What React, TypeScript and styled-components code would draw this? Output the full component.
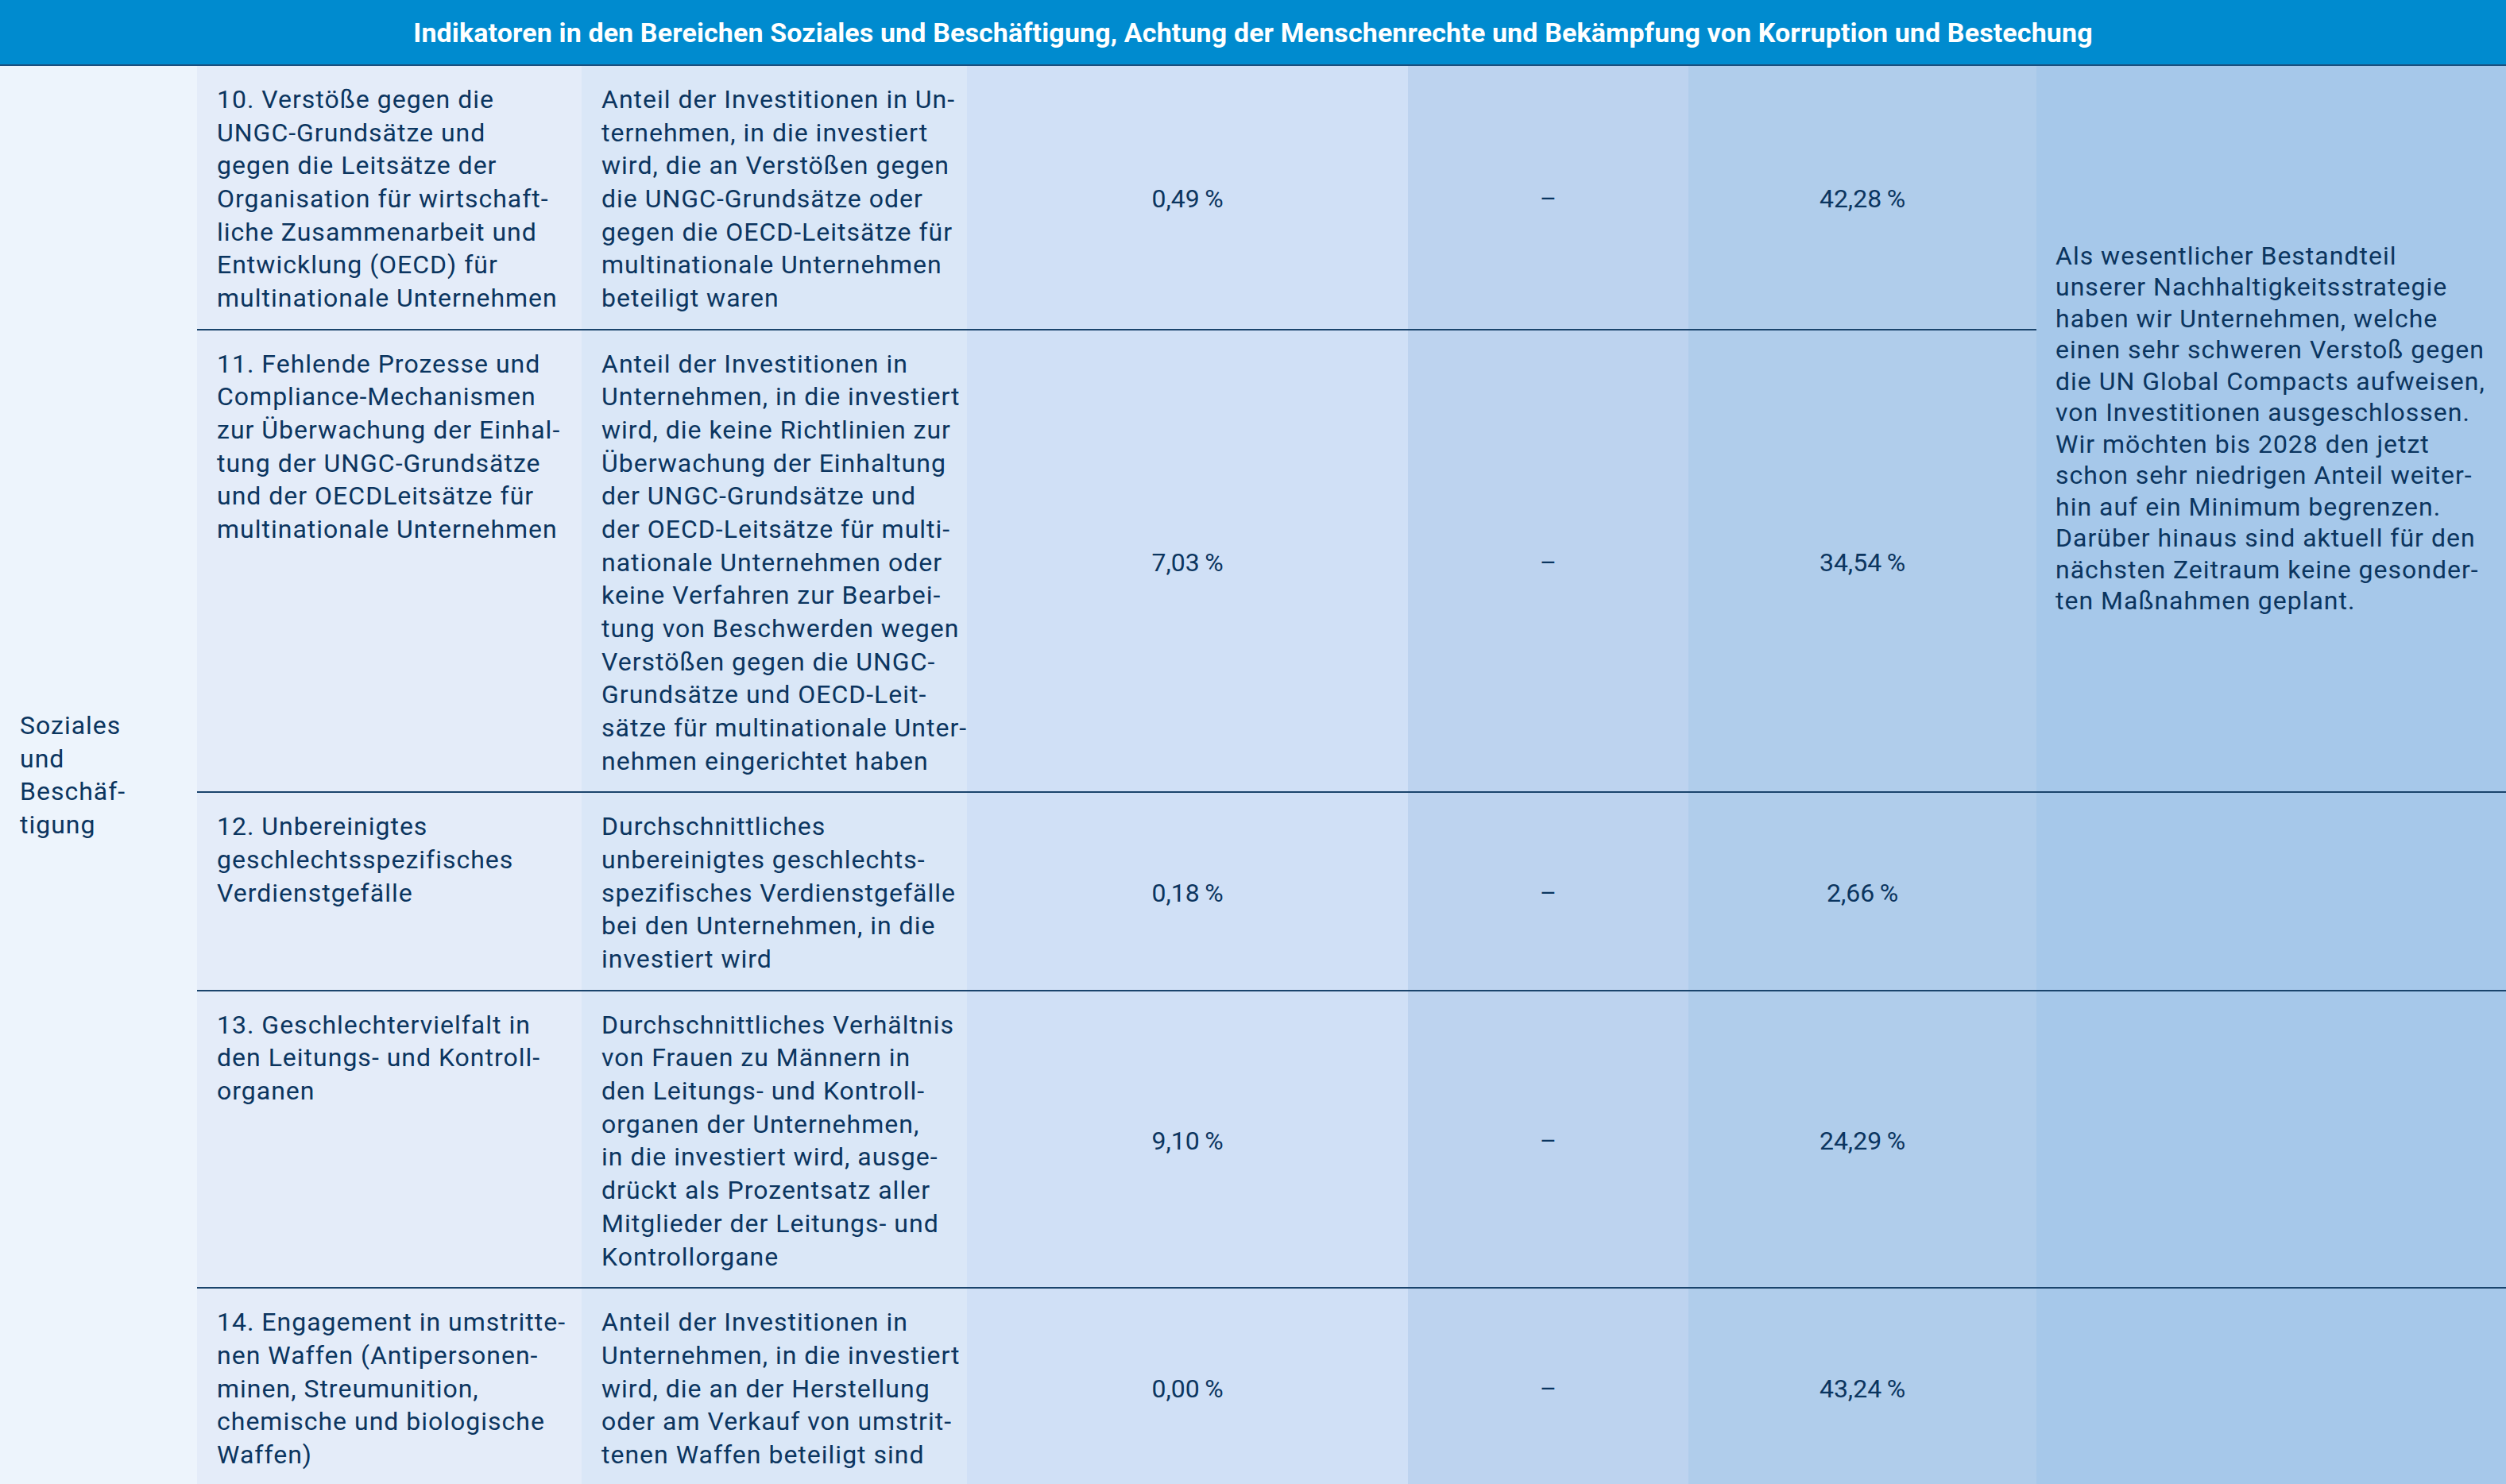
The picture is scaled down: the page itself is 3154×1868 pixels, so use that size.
import React from "react";
import styled, { createGlobalStyle } from "styled-components";

const GlobalStyle = createGlobalStyle`
  html, body { margin: 0; padding: 0; background: #ffffff; }
  body { font-family: Roboto, "Liberation Sans", Arial, sans-serif; }
  * { box-sizing: border-box; }
`;

const COL_WIDTHS = [248, 484, 485, 555, 353, 438, 591];
const COL_BG = ["#edf4fc", "#e4ecf9", "#dae7f7", "#d0e0f6", "#bdd3ef", "#b0cdeb", "#a6c8ea"];
const INK = "#0b355f";
const RULE = "#1a446c";

const Table = styled.table`
  width: 3154px;
  border-collapse: separate;
  border-spacing: 0;
  table-layout: fixed;
  color: ${INK};
  font-family: Roboto, "Liberation Sans", Arial, sans-serif;
  font-size: 32px;
  line-height: 41.67px;
`;

const Col = styled.col<{ $w: number }>`
  width: ${(p) => p.$w}px;
`;

const HeadCell = styled.th`
  height: 83px;
  padding: 0 20px;
  background: #008bcf;
  color: #ffffff;
  font-weight: 700;
  font-size: 34px;
  letter-spacing: 0.12px;
  line-height: 40px;
  text-align: center;
  vertical-align: middle;
  border-bottom: 2px solid #1b4f7e;
`;

const CategoryCell = styled.td`
  background: ${COL_BG[0]};
  padding: 0 20px 0 25px;
  vertical-align: middle;
  white-space: nowrap;
  letter-spacing: 1px;
`;

const TextCell = styled.td<{ $col: number; $rule: boolean }>`
  background: ${(p) => COL_BG[p.$col]};
  padding: 22px 6px 17px 25px;
  vertical-align: top;
  white-space: nowrap;
  letter-spacing: 1px;
  border-top: ${(p) => (p.$rule ? `2px solid ${RULE}` : "none")};
`;

const ValueCell = styled.td<{ $col: number; $rule: boolean }>`
  background: ${(p) => COL_BG[p.$col]};
  padding: 22px 0 17px;
  text-align: center;
  vertical-align: middle;
  white-space: nowrap;
  border-top: ${(p) => (p.$rule ? `2px solid ${RULE}` : "none")};
`;

const NoteCell = styled.td<{ $rule: boolean }>`
  background: ${COL_BG[6]};
  padding: 0 6px 0 24px;
  vertical-align: middle;
  white-space: nowrap;
  letter-spacing: 1px;
  line-height: 39.5px;
  border-top: ${(p) => (p.$rule ? `2px solid ${RULE}` : "none")};
`;

const Lines: React.FC<{ lines: string[] }> = ({ lines }) => (
  <>
    {lines.map((l, i) => (
      <React.Fragment key={i}>
        {l}
        {i < lines.length - 1 && <br />}
      </React.Fragment>
    ))}
  </>
);

type Row = {
  indicator: string[];
  metric: string[];
  values: [string, string, string];
};

const ROWS: Row[] = [
  {
    indicator: [
      "10. Verstöße gegen die",
      "UNGC-Grundsätze und",
      "gegen die Leitsätze der",
      "Organisation für wirtschaft-",
      "liche Zusammenarbeit und",
      "Entwicklung (OECD) für",
      "multinationale Unternehmen",
    ],
    metric: [
      "Anteil der Investitionen in Un-",
      "ternehmen, in die investiert",
      "wird, die an Verstößen gegen",
      "die UNGC-Grundsätze oder",
      "gegen die OECD-Leitsätze für",
      "multinationale Unternehmen",
      "beteiligt waren",
    ],
    values: ["0,49\u2009%", "–", "42,28\u2009%"],
  },
  {
    indicator: [
      "11. Fehlende Prozesse und",
      "Compliance-Mechanismen",
      "zur Überwachung der Einhal-",
      "tung der UNGC-Grundsätze",
      "und der OECDLeitsätze für",
      "multinationale Unternehmen",
    ],
    metric: [
      "Anteil der Investitionen in",
      "Unternehmen, in die investiert",
      "wird, die keine Richtlinien zur",
      "Überwachung der Einhaltung",
      "der UNGC-Grundsätze und",
      "der OECD-Leitsätze für multi-",
      "nationale Unternehmen oder",
      "keine Verfahren zur Bearbei-",
      "tung von Beschwerden wegen",
      "Verstößen gegen die UNGC-",
      "Grundsätze und OECD-Leit-",
      "sätze für multinationale Unter-",
      "nehmen eingerichtet haben",
    ],
    values: ["7,03\u2009%", "–", "34,54\u2009%"],
  },
  {
    indicator: ["12. Unbereinigtes", "geschlechtsspezifisches", "Verdienstgefälle"],
    metric: [
      "Durchschnittliches",
      "unbereinigtes geschlechts-",
      "spezifisches Verdienstgefälle",
      "bei den Unternehmen, in die",
      "investiert wird",
    ],
    values: ["0,18\u2009%", "–", "2,66\u2009%"],
  },
  {
    indicator: ["13. Geschlechtervielfalt in", "den Leitungs- und Kontroll-", "organen"],
    metric: [
      "Durchschnittliches Verhältnis",
      "von Frauen zu Männern in",
      "den Leitungs- und Kontroll-",
      "organen der Unternehmen,",
      "in die investiert wird, ausge-",
      "drückt als Prozentsatz aller",
      "Mitglieder der Leitungs- und",
      "Kontrollorgane",
    ],
    values: ["9,10\u2009%", "–", "24,29\u2009%"],
  },
  {
    indicator: [
      "14. Engagement in umstritte-",
      "nen Waffen (Antipersonen-",
      "minen, Streumunition,",
      "chemische und biologische",
      "Waffen)",
    ],
    metric: [
      "Anteil der Investitionen in",
      "Unternehmen, in die investiert",
      "wird, die an der Herstellung",
      "oder am Verkauf von umstrit-",
      "tenen Waffen beteiligt sind",
    ],
    values: ["0,00\u2009%", "–", "43,24\u2009%"],
  },
];

const NOTE = [
  "Als wesentlicher Bestandteil",
  "unserer Nachhaltigkeitsstrategie",
  "haben wir Unternehmen, welche",
  "einen sehr schweren Verstoß gegen",
  "die UN Global Compacts aufweisen,",
  "von Investitionen ausgeschlossen.",
  "Wir möchten bis 2028 den jetzt",
  "schon sehr niedrigen Anteil weiter-",
  "hin auf ein Minimum begrenzen.",
  "Darüber hinaus sind aktuell für den",
  "nächsten Zeitraum keine gesonder-",
  "ten Maßnahmen geplant.",
];

export default function App() {
  return (
    <>
      <GlobalStyle />
      <Table>
        <colgroup>
          {COL_WIDTHS.map((w, i) => (
            <Col key={i} $w={w} />
          ))}
        </colgroup>
        <thead>
          <tr>
            <HeadCell colSpan={7}>
              Indikatoren in den Bereichen Soziales und Beschäftigung, Achtung der Menschenrechte und
              Bekämpfung von Korruption und Bestechung
            </HeadCell>
          </tr>
        </thead>
        <tbody>
          {ROWS.map((row, r) => {
            const rule = r > 0;
            return (
              <tr key={r}>
                {r === 0 && (
                  <CategoryCell rowSpan={ROWS.length}>
                    <Lines lines={["Soziales", "und", "Beschäf-", "tigung"]} />
                  </CategoryCell>
                )}
                <TextCell $col={1} $rule={rule}>
                  <Lines lines={row.indicator} />
                </TextCell>
                <TextCell $col={2} $rule={rule}>
                  <Lines lines={row.metric} />
                </TextCell>
                {row.values.map((v, i) => (
                  <ValueCell key={i} $col={3 + i} $rule={rule}>
                    {v}
                  </ValueCell>
                ))}
                {r === 0 && (
                  <NoteCell rowSpan={2} $rule={false}>
                    <Lines lines={NOTE} />
                  </NoteCell>
                )}
                {r >= 2 && <NoteCell $rule={true} />}
              </tr>
            );
          })}
        </tbody>
      </Table>
    </>
  );
}
